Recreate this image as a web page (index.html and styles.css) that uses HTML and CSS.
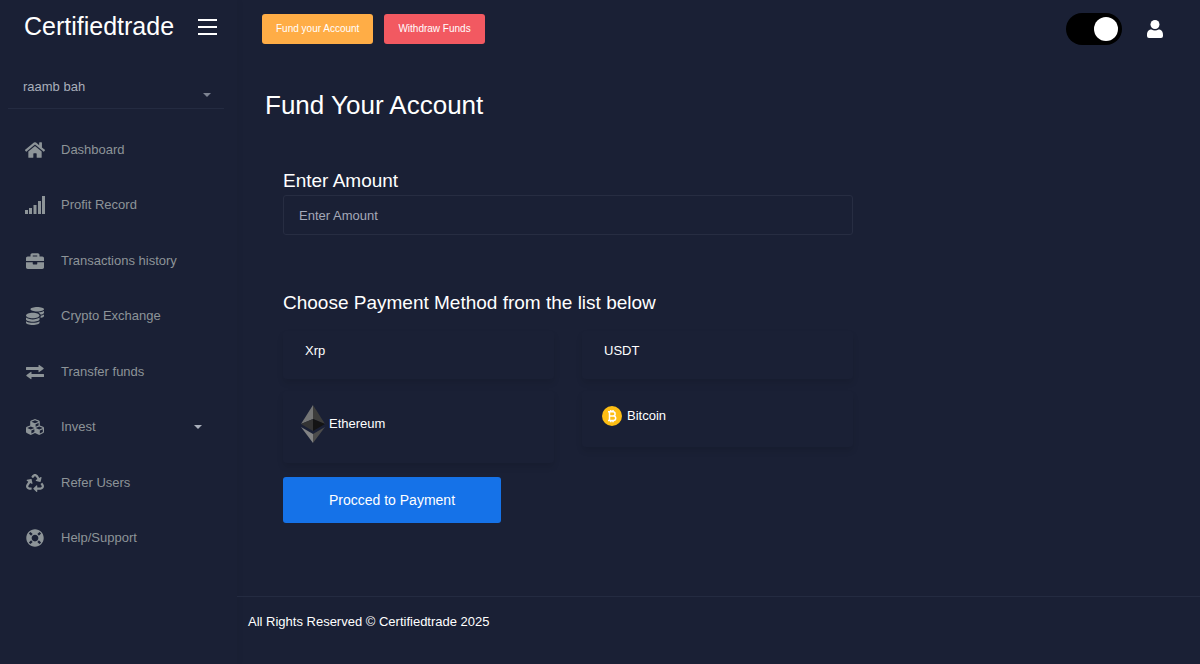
FILE: index.html
```html
<!DOCTYPE html>
<html lang="en">
<head>
  <meta charset="UTF-8">
  <meta name="viewport" content="width=device-width, initial-scale=1.0">
  <title>Certifiedtrade | Fund Your Account</title>
  <link rel="stylesheet" href="styles.css">
</head>
<body>

  <aside class="sidebar">
    <div class="logo-header">
      <a href="#" class="logo">Certifiedtrade</a>
      <button type="button" class="menu-btn" aria-label="Toggle menu">
        <svg width="19" height="16" viewBox="0 0 19 16"><path d="M0 1h19M0 8h19M0 15h19" stroke="#fff" stroke-width="2"/></svg>
      </button>
    </div>

    <button type="button" class="user">
      <span>raamb bah</span>
      <span class="caret"></span>
    </button>

    <nav class="nav">
      <a href="#">
        <svg viewBox="0 0 576 512"><path d="M280.37 148.26L96 300.11V464a16 16 0 0 0 16 16l112.06-.29a16 16 0 0 0 15.92-16V368a16 16 0 0 1 16-16h64a16 16 0 0 1 16 16v95.64a16 16 0 0 0 16 16.05L464 480a16 16 0 0 0 16-16V300L295.67 148.26a12.19 12.19 0 0 0-15.3 0zM571.6 251.47L488 182.56V44.05a12 12 0 0 0-12-12h-56a12 12 0 0 0-12 12v72.61L318.47 43a48 48 0 0 0-61 0L4.34 251.47a12 12 0 0 0-1.6 16.9l25.5 31A12 12 0 0 0 45.15 301l235.22-193.74a12.19 12.19 0 0 1 15.3 0L530.9 301a12 12 0 0 0 16.9-1.6l25.5-31a12 12 0 0 0-1.7-16.93z"/></svg>
        <span>Dashboard</span>
      </a>
      <a href="#">
        <svg viewBox="0 0 20 18"><path d="M0 14h3v4H0zM4 12h3v6H4zM8.500 9h3v9h-3zM13 5h3v13h-3zM17 0h3v18h-3z"/></svg>
        <span>Profit Record</span>
      </a>
      <a href="#">
        <svg viewBox="0 0 512 512"><path d="M320 336c0 8.840-7.160 16-16 16h-96c-8.840 0-16-7.160-16-16v-48H0v144c0 25.600 22.400 48 48 48h416c25.600 0 48-22.400 48-48V288H320v48zm144-208h-80V80c0-25.600-22.400-48-48-48H176c-25.600 0-48 22.400-48 48v48H48c-25.600 0-48 22.400-48 48v80h512v-80c0-25.600-22.400-48-48-48zm-144 0H192V96h128v32z"/></svg>
        <span>Transactions history</span>
      </a>
      <a href="#">
        <svg viewBox="0 0 512 512"><path d="M0 405.3V448c0 35.3 86 64 192 64s192-28.7 192-64v-42.7C342.7 434.4 267.2 448 192 448S41.3 434.4 0 405.3zM320 128c106 0 192-28.7 192-64S426 0 320 0 128 28.7 128 64s86 64 192 64zM0 300.4V352c0 35.3 86 64 192 64s192-28.7 192-64v-51.6c-41.3 34-116.9 51.6-192 51.6S41.3 334.4 0 300.4zm416 11c57.3-11.1 96-31.7 96-55.4v-42.7c-23.2 16.4-57.3 27.6-96 34.5v63.6zM192 160C86 160 0 195.8 0 240s86 80 192 80 192-35.8 192-80-86-80-192-80zm219.3 56.3c60-10.8 100.7-32 100.7-56.3v-42.7c-35.5 25.1-96.5 38.6-160.7 41.8 29.5 14.3 51.2 33.5 60 57.2z"/></svg>
        <span>Crypto Exchange</span>
      </a>
      <a href="#">
        <svg viewBox="0 0 18 18"><path d="M.5 4h12V2.500q0-1 .8-.4l4.200 3q.5.500 0 1l-4.200 3q-.8.500-.8-.4V7H.5q-.5 0-.5-.5v-2q0-.5.5-.5zM17.500 11h-12V9.300q0-1-.8-.4L.5 12q-.5.500 0 1l4.200 3q.8.500.8-.4V14h12q.5 0 .5-.5v-2q0-.5-.5-.5z"/></svg>
        <span>Transfer funds</span>
      </a>
      <a href="#">
        <svg viewBox="0 0 512 512"><path d="M488.6 250.2L392 214V105.5c0-15-9.3-28.4-23.4-33.7l-100-37.5c-8.1-3.1-17.1-3.1-25.3 0l-100 37.5c-14.1 5.3-23.4 18.7-23.4 33.7V214l-96.6 36.2C9.3 255.5 0 268.9 0 283.9V394c0 13.6 7.7 26.1 19.9 32.2l100 50c10.1 5.1 22.1 5.1 32.2 0l103.9-52 103.9 52c10.1 5.1 22.1 5.1 32.2 0l100-50c12.2-6.1 19.9-18.6 19.9-32.2V283.9c0-15-9.3-28.4-23.4-33.7zM358 214.8l-85 31.9v-68.2l85-37v73.3zM154 104.1l102-38.2 102 38.2v.6l-102 41.4-102-41.4v-.6zm84 291.1l-85 42.5v-79.1l85-38.8v75.4zm0-112l-102 41.4-102-41.4v-.6l102-38.2 102 38.2v.6zm240 112l-85 42.5v-79.1l85-38.8v75.4zm0-112l-102 41.4-102-41.4v-.6l102-38.2 102 38.2v.6z"/></svg>
        <span>Invest</span>
        <span class="caret"></span>
      </a>
      <a href="#">
        <svg viewBox="0 0 512 512"><path d="M184.561 261.903c3.232 13.997-12.123 24.635-24.068 17.168l-40.736-25.455-50.867 81.402C55.606 356.273 70.96 384 96.012 384H148c6.627 0 12 5.373 12 12v40c0 6.627-5.373 12-12 12H96.115c-75.334 0-121.302-83.048-81.408-146.88l50.822-81.388-40.725-25.448c-12.081-7.547-8.966-25.961 4.879-29.158l110.237-25.45c8.611-1.988 17.201 3.381 19.189 11.99l25.452 110.237zm98.561-182.915l41.289 66.076-40.74 25.457c-12.051 7.528-9 25.953 4.879 29.158l110.237 25.45c8.672 1.999 17.215-3.438 19.189-11.99l25.45-110.237c3.197-13.844-11.99-24.719-24.068-17.168l-40.687 25.424-41.263-66.082c-37.521-60.033-125.209-60.171-162.816 0l-17.963 28.766c-3.51 5.62-1.8 13.021 3.82 16.533l33.919 21.195c5.62 3.512 13.024 1.803 16.536-3.817l17.961-28.743c12.712-20.341 41.973-19.676 54.257-.022zM497.288 301.12l-27.515-44.065c-3.511-5.623-10.916-7.334-16.538-3.821l-33.861 21.159c-5.62 3.512-7.33 10.915-3.818 16.536l27.564 44.112c13.257 21.211-2.057 48.96-27.136 48.96H320V336.02c0-14.213-17.242-21.383-27.313-11.313l-80 79.981c-6.249 6.248-6.249 16.379 0 22.627l80 79.989C302.689 517.308 320 510.3 320 495.989V448h95.88c75.274 0 121.335-82.997 81.408-146.88z"/></svg>
        <span>Refer Users</span>
      </a>
      <a href="#">
        <svg viewBox="0 0 512 512"><path d="M256 8C119.033 8 8 119.033 8 256s111.033 248 248 248 248-111.033 248-248S392.967 8 256 8zm173.696 119.559l-63.399 63.399c-10.987-18.559-26.67-34.252-45.255-45.255l63.399-63.399a218.396 218.396 0 0 1 45.255 45.255zM256 352c-53.019 0-96-42.981-96-96s42.981-96 96-96 96 42.981 96 96-42.981 96-96 96zM127.559 82.304l63.399 63.399c-18.559 10.987-34.252 26.67-45.255 45.255l-63.399-63.399a218.372 218.372 0 0 1 45.255-45.255zM82.304 384.441l63.399-63.399c10.987 18.559 26.67 34.252 45.255 45.255l-63.399 63.399a218.396 218.396 0 0 1-45.255-45.255zm302.137 45.255l-63.399-63.399c18.559-10.987 34.252-26.67 45.255-45.255l63.399 63.399a218.403 218.403 0 0 1-45.255 45.255z"/></svg>
        <span>Help/Support</span>
      </a>
    </nav>
  </aside>

  <div class="page">
    <header class="topbar">
      <a href="#" class="btn btn-warning">Fund your Account</a>
      <a href="#" class="btn btn-danger">Withdraw Funds</a>
      <input type="checkbox" class="switch" aria-label="Dark mode" checked>
      <button type="button" class="profile" aria-label="Profile">
        <svg width="16" height="18" viewBox="0 0 16 18"><circle cx="8" cy="4.500" r="4.500" fill="#fff"/><path d="M0 15c0-4 2-5.500 4.500-5.500 2 1.300 5 1.300 7 0C14 9.500 16 11 16 15v1q0 2-2 2H2q-2 0-2-2z" fill="#fff"/></svg>
      </button>
    </header>

    <main class="content">
      <h1>Fund Your Account</h1>
      <div class="card">
        <form class="fund-form">
          <label for="amount" class="title">Enter Amount</label>
          <input type="text" id="amount" class="amount" placeholder="Enter Amount">

          <h2 class="title">Choose Payment Method from the list below</h2>
          <div class="methods">
            <button type="button" class="method">Xrp</button>
            <button type="button" class="method">USDT</button>
            <button type="button" class="method method-eth">
              <svg width="24" height="40" viewBox="0 0 24 40">
                <path d="M12 1L0 20l12-5z" fill="#747575"/>
                <path d="M12 1l12 19-12-5z" fill="#3c3c3b"/>
                <path d="M0 20l12-5v12z" fill="#343434"/>
                <path d="M24 20l-12-5v12z" fill="#141414"/>
                <path d="M0 23l12 7v9z" fill="#828384"/>
                <path d="M24 23l-12 7v9z" fill="#4c4c4c"/>
              </svg>
              <span>Ethereum</span>
            </button>
            <button type="button" class="method method-btc">
              <svg width="20" height="20" viewBox="0 0 20 20">
                <circle cx="10" cy="10" r="10" fill="#fdbe14"/>
                <g fill="none" stroke="#fff" stroke-width="1.500">
                  <path d="M6 5.800h5a2 2 0 0 1 0 4.200H7.500h4a2.200 2.200 0 0 1 0 4.400H6M7.500 5.800v8.600M8.800 4v2M11 4v2M8.800 14v2.200M11 14v2.200"/>
                </g>
              </svg>
              <span>Bitcoin</span>
            </button>
          </div>

          <button type="submit" class="submit">Procced to Payment</button>
        </form>
      </div>
    </main>

    <footer class="footer">All Rights Reserved © Certifiedtrade 2025</footer>
  </div>

</body>
</html>
```
FILE: styles.css
```css
* {
  box-sizing: border-box;
}
body {
  margin: 0;
  min-height: 100vh;
  display: flex;
  background-color: #1a2035;
  color: #fff;
  font-family: "Liberation Sans", Arial, sans-serif;
  font-size: 13px;
  line-height: 20px;
}
a {
  color: inherit;
  text-decoration: none;
}
button, input {
  font: inherit;
  color: inherit;
}
button {
  background: none;
  border: none;
  padding: 0;
  cursor: pointer;
}
svg {
  display: block;
  flex: none;
}

/* sidebar */
.sidebar {
  width: 237px;
  flex: none;
  box-shadow: 2px 0 6px rgba(0, 0, 0, 0.04);
}
.logo-header {
  height: 62px;
  padding: 10px 20px 0 24px;
  display: flex;
  align-items: flex-start;
  justify-content: space-between;
}
.logo {
  font-size: 25px;
  line-height: 32px;
}
.menu-btn {
  margin-top: 9px;
}
.user {
  width: 216px;
  height: 47px;
  margin: 0 8px;
  padding: 15px 13px 11px 15px;
  display: flex;
  justify-content: space-between;
  align-items: flex-start;
  border-bottom: 1px solid #242b41;
  color: #a9afbb;
}
.caret {
  border: 4px solid transparent;
  border-top-color: currentColor;
  border-bottom: 0;
}
.user .caret {
  margin-top: 16px;
  opacity: 0.7;
}
.nav {
  height: 449px;
  padding: 21px 35px 0 25px;
  display: flex;
  flex-direction: column;
  justify-content: space-between;
}
.nav a {
  height: 40px;
  display: flex;
  align-items: center;
  color: #8d9498;
}
.nav svg {
  width: 20px;
  height: 18px;
  margin-right: 16px;
  fill: #8d9498;
}
.nav .caret {
  margin-left: auto;
  color: #a9afbb;
}

/* top bar */
.page {
  flex: 1;
  min-width: 0;
  display: flex;
  flex-direction: column;
}
.topbar {
  height: 58px;
  padding: 0 37px 0 25px;
  display: flex;
  align-items: center;
}
.btn {
  margin-right: 11px;
  padding: 5px 14px;
  border-radius: 3px;
  font-size: 10px;
}
.btn-warning {
  background-color: #ffad46;
}
.btn-danger {
  background-color: #f25961;
}
.switch {
  appearance: none;
  width: 56px;
  height: 32px;
  margin: 0 25px 0 auto;
  padding: 4px;
  display: flex;
  justify-content: flex-start;
  border-radius: 16px;
  background-color: #000;
  cursor: pointer;
}
.switch::before {
  content: "";
  width: 24px;
  height: 24px;
  border-radius: 50%;
  background-color: #fff;
}
.switch:checked {
  justify-content: flex-end;
}

/* content */
.content {
  flex: 1;
  padding: 31px 24px 40px 28px;
}
h1 {
  margin: 0 0 35px;
  font-size: 26px;
  font-weight: normal;
  line-height: 32px;
}
.card {
  padding: 12px 18px 32px;
  display: grid;
  grid-template-columns: 2fr 1fr;
  gap: 20px;
}
.title {
  display: block;
  margin: 0;
  font-size: 19px;
  font-weight: normal;
  line-height: 26px;
}
.amount {
  width: 100%;
  height: 40px;
  margin: 1px 0 55px;
  padding: 0 15px;
  display: block;
  border: 1px solid #272d42;
  border-radius: 3px;
  background-color: #1a2035;
}
.amount::placeholder {
  color: #a5a9b8;
  opacity: 1;
}
.methods {
  margin: 15px 0 14px;
  display: grid;
  grid-template-columns: 1fr 1fr;
  align-items: start;
  gap: 12px 28px;
}
.method {
  height: 48px;
  padding: 10px 22px;
  display: flex;
  align-items: flex-start;
  border-radius: 4px;
  box-shadow: 0 4px 6px rgba(0, 0, 0, 0.1);
}
.method-eth {
  height: 72px;
  padding: 10px 18px 16px;
  align-items: center;
  gap: 4px;
}
.method-btc {
  height: 56px;
  padding: 15px 20px;
  gap: 5px;
}
.submit {
  width: 218px;
  height: 46px;
  border-radius: 3px;
  background-color: #1572e8;
  font-size: 14px;
}

.footer {
  padding: 15px 12px 32px 11px;
  border-top: 1px solid #242b41;
}
```
